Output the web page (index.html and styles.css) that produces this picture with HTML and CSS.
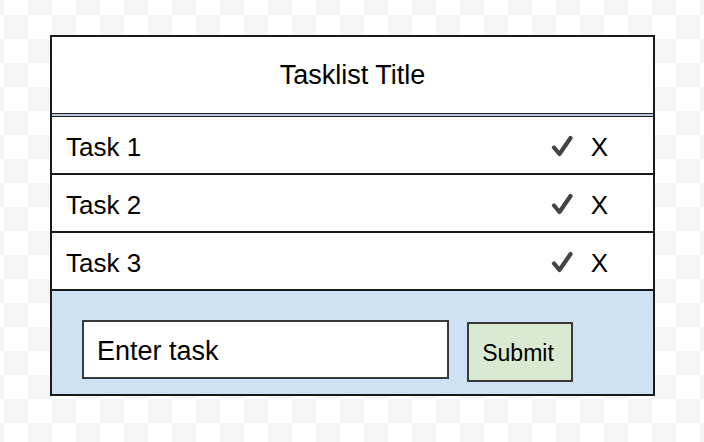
FILE: index.html
```html
<!DOCTYPE html>
<html>
<head>
<meta charset="utf-8">
<link rel="stylesheet" href="styles.css">
</head>
<body>
<div class="card">
  <div class="title">Tasklist Title</div>
  <div class="divider"></div>
  <div class="row">
    <span class="task">Task 1</span>
    <svg class="check" viewBox="0 0 22 22" width="22" height="22"><path d="M3 12.5 L8.5 19 L19.5 3" fill="none" stroke="#444" stroke-width="4.2" stroke-linecap="round" stroke-linejoin="round"/></svg>
    <span class="x">X</span>
  </div>
  <div class="row">
    <span class="task">Task 2</span>
    <svg class="check" viewBox="0 0 22 22" width="22" height="22"><path d="M3 12.5 L8.5 19 L19.5 3" fill="none" stroke="#444" stroke-width="4.2" stroke-linecap="round" stroke-linejoin="round"/></svg>
    <span class="x">X</span>
  </div>
  <div class="row">
    <span class="task">Task 3</span>
    <svg class="check" viewBox="0 0 22 22" width="22" height="22"><path d="M3 12.5 L8.5 19 L19.5 3" fill="none" stroke="#444" stroke-width="4.2" stroke-linecap="round" stroke-linejoin="round"/></svg>
    <span class="x">X</span>
  </div>
  <div class="form">
    <div class="input">Enter task</div>
    <div class="button">Submit</div>
  </div>
</div>
</body>
</html>
```
FILE: styles.css
```css
html, body {
  margin: 0;
  padding: 0;
}
body {
  min-height: 442px;
  box-sizing: border-box;
  padding: 35px 0 0 50px;
  background-color: #fff;
  background-image: conic-gradient(#fff 25%, #f5f5f5 0 50%, #fff 0 75%, #f5f5f5 0);
  background-size: 48px 48px;
  background-position: 4px 15px;
  font-family: "Liberation Sans", Arial, sans-serif;
  color: #000;
}
.card {
  width: 605px;
  box-sizing: border-box;
  border: 2px solid #1a1a1a;
  background: #fff;
  display: flex;
  flex-direction: column;
}
.title {
  height: 76px;
  display: flex;
  align-items: center;
  justify-content: center;
  padding-top: 1px;
  box-sizing: border-box;
  font-size: 27px;
}
.divider {
  height: 2px;
  border-top: 1px solid #222;
  border-bottom: 1px solid #222;
  background: #b9c9db;
}
.row {
  height: 56px;
  border-bottom: 2px solid #1a1a1a;
  display: flex;
  align-items: center;
  padding: 0 45px 0 14px;
  font-size: 26px;
}
.task {
  flex: 1;
  padding-top: 5px;
}
.check {
  display: block;
  margin-top: 2px;
}
.x {
  margin-left: 18px;
  padding-top: 5px;
}
.form {
  height: 103px;
  box-sizing: border-box;
  background: #cfe2f3;
  display: flex;
  align-items: flex-start;
  padding: 29px 0 0 30px;
}
.input {
  width: 367px;
  height: 59px;
  box-sizing: border-box;
  border: 2px solid #3a3a3a;
  background: #fff;
  display: flex;
  align-items: center;
  padding: 3px 0 0 13px;
  font-size: 27px;
}
.button {
  width: 106px;
  height: 60px;
  box-sizing: border-box;
  margin: 2px 0 0 18px;
  border: 2px solid #3a3a3a;
  background: #d9ead3;
  display: flex;
  align-items: center;
  justify-content: center;
  padding: 2px 4px 0 0;
  font-size: 23px;
}
```
